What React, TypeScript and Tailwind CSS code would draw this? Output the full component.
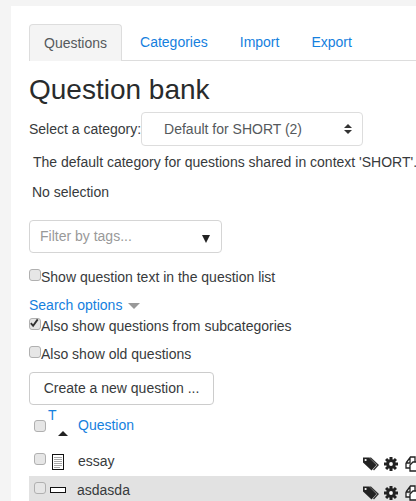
function Checkbox({ checked = false, className = "" }: { checked?: boolean; className?: string }) {
  return (
    <span className={`relative inline-block w-[12px] h-[12px] shrink-0 rounded-[3px] border-[1.5px] border-[#b0b0b0] bg-[#e6e6e6] ${className}`}>
      {checked && (
        <svg viewBox="0 0 12 12" className="absolute -left-[1px] -top-[1px] w-[11px] h-[11px]">
          <path d="M2 5.5 L4.5 8.5 L9.5 1.5" fill="none" stroke="#333" strokeWidth="2" />
        </svg>
      )}
    </span>
  )
}

function EssayIcon() {
  return (
    <svg viewBox="0 0 12 16" className="w-[12px] h-[16px] shrink-0">
      <rect x="0.5" y="0.5" width="11" height="15" fill="#fff" stroke="#111" />
      <path d="M2 3.5h8M2 5.5h8M2 7.5h8M2 9.5h8M2 11.5h8M2 13.5h6" stroke="#a8a8a8" strokeWidth="1" />
    </svg>
  )
}

function ShortIcon() {
  return (
    <svg viewBox="0 0 16 6" className="w-[16px] h-[6px] shrink-0">
      <rect x="0.5" y="0.5" width="15" height="5" fill="#fff" stroke="#111" />
    </svg>
  )
}

function TagIcon() {
  return (
    <svg viewBox="0 0 18 14" className="w-[18px] h-[14px] shrink-0">
      <path d="M7 0.5 H9 L17 8 L12 13.5 L11 12.5 L15 8 Z" fill="#333" />
      <path d="M1 0.5 L7 0.5 L14.5 8 L9.5 13.5 L1 5.5 Z" fill="#222" />
      <circle cx="3.6" cy="3" r="1.1" fill="#fff" />
    </svg>
  )
}

function GearIcon() {
  return (
    <svg viewBox="0 0 14 14" className="w-[14px] h-[14px] shrink-0">
      {[0, 45, 90, 135].map((deg) => (
        <rect key={deg} x="5.5" y="0" width="3" height="14" fill="#222" transform={`rotate(${deg} 7 7)`} />
      ))}
      <circle cx="7" cy="7" r="4.8" fill="#222" />
      <circle cx="7" cy="7" r="1.9" fill="#fff" />
    </svg>
  )
}

function CopyIcon() {
  return (
    <svg viewBox="0 0 14 16" className="w-[14px] h-[16px] shrink-0">
      <path d="M1 7 L5.5 1 H10 V6 M1 7 V12 H5 M1 7 H5 V2" fill="#fff" stroke="#222" strokeWidth="1.3" />
      <path d="M5 9 L8 6 H13.5 V15 H5 Z" fill="#fff" stroke="#222" strokeWidth="1.3" />
    </svg>
  )
}

function RowActions() {
  return (
    <div className="flex items-center shrink-0 -mr-[3px]">
      <TagIcon />
      <span className="ml-[4px]"><GearIcon /></span>
      <span className="ml-[7px]"><CopyIcon /></span>
    </div>
  )
}

export default function App() {
  return (
    <div className="w-[416px] h-[501px] overflow-hidden bg-[#f4f4f4] pl-[11px] pt-[6px] font-['Liberation_Sans',Arial,sans-serif] text-[14px] text-[#373a3c]">
      <div className="w-[405px] h-[495px] overflow-hidden bg-white pl-[18px] pt-[18px]">
        {/* Tabs */}
        <div className="flex h-[37px] border-b border-[#dddddd] w-[387px]">
          <div className="h-[37px] px-[14px] flex items-center rounded-t-[4px] border border-b-0 border-[#dddddd] bg-[#f4f4f4] text-[#55595c]">
            Questions
          </div>
          <a className="h-[36px] pl-[18px] pr-[16px] flex items-center text-[#1580de]">Categories</a>
          <a className="h-[36px] pl-[16px] pr-[16px] flex items-center text-[#1580de]">Import</a>
          <a className="h-[36px] pl-[16px] pr-[16px] flex items-center text-[#1580de]">Export</a>
        </div>

        <h2 className="text-[28px] leading-[30px] text-[#292b2c] mt-[14px]">Question bank</h2>

        {/* Category select */}
        <div className="flex items-center mt-[7px] h-[34px]">
          <span>Select a category:</span>
          <div className="relative w-[222px] h-[34px] flex items-center pl-[22px] rounded-[4px] border border-[#dddddd] text-[#55595c]">
            Default for SHORT (2)
            <svg viewBox="0 0 8 10" className="absolute right-[10px] top-[11px] w-[8px] h-[10px]">
              <path d="M4 0 L8 4 H0 Z M4 10 L0 6 H8 Z" fill="#333" />
            </svg>
          </div>
        </div>

        <p className="mt-[6px] ml-[4px] whitespace-nowrap leading-[20px]">
          The default category for questions shared in context 'SHORT'.
        </p>
        <p className="mt-[10px] ml-[3px] leading-[20px]">No selection</p>

        {/* Tag filter */}
        <div className="relative mt-[18px] w-[193px] h-[33px] flex items-center pl-[10px] rounded-[4px] border border-[#d5d5d5] text-[#999999]">
          Filter by tags...
          <span className="absolute right-[11px] top-[14px] w-0 h-0 border-x-[4px] border-t-[8px] border-x-transparent border-t-[#222]" />
        </div>

        <label className="flex items-start mt-[14px] h-[20px] leading-[20px]">
          <Checkbox className="mt-[2px]" />
          <span>Show question text in the question list</span>
        </label>

        <div className="flex items-center mt-[8px] h-[20px] text-[#1580de]">
          Search options
          <span className="ml-[6px] mt-[2px] w-0 h-0 border-x-[6px] border-t-[6px] border-x-transparent border-t-[#999999]" />
        </div>

        <label className="flex items-start mt-[1px] h-[20px] leading-[20px]">
          <Checkbox checked className="mt-[2px]" />
          <span>Also show questions from subcategories</span>
        </label>

        <label className="flex items-start mt-[8px] h-[20px] leading-[20px]">
          <Checkbox className="mt-[2px]" />
          <span>Also show old questions</span>
        </label>

        <div className="mt-[8px] w-[185px] h-[33px] flex items-center justify-center rounded-[4px] border border-[#cccccc] text-[#373a3c]">
          Create a new question ...
        </div>

        {/* Question table */}
        <div className="relative h-[42px] w-[387px]">
          <Checkbox className="absolute left-[5px] top-[12px]" />
          <a className="absolute left-[19px] top-[2px] text-[#1580de] leading-[16px]">T</a>
          <span className="absolute left-[29px] top-[26px] w-0 h-0 border-x-[5px] border-b-[5px] border-x-transparent border-b-[#222]" />
          <a className="absolute left-[49px] top-[10px] text-[#1580de] leading-[20px]">Question</a>
        </div>

        <div className="flex items-center h-[29px] w-[387px]">
          <Checkbox className="ml-[5px] mb-[5px]" />
          <span className="ml-[6px]"><EssayIcon /></span>
          <span className="ml-[14px] mb-[1px]">essay</span>
          <div className="ml-auto mt-[4px]"><RowActions /></div>
        </div>

        <div className="flex items-center h-[29px] w-[387px] bg-[#e2e2e2]">
          <Checkbox className="ml-[5px] mb-[5px]" />
          <span className="ml-[4px] mb-[1px]"><ShortIcon /></span>
          <span className="ml-[11px] mb-[1px]">asdasda</span>
          <div className="ml-auto mt-[4px]"><RowActions /></div>
        </div>
      </div>
    </div>
  )
}
